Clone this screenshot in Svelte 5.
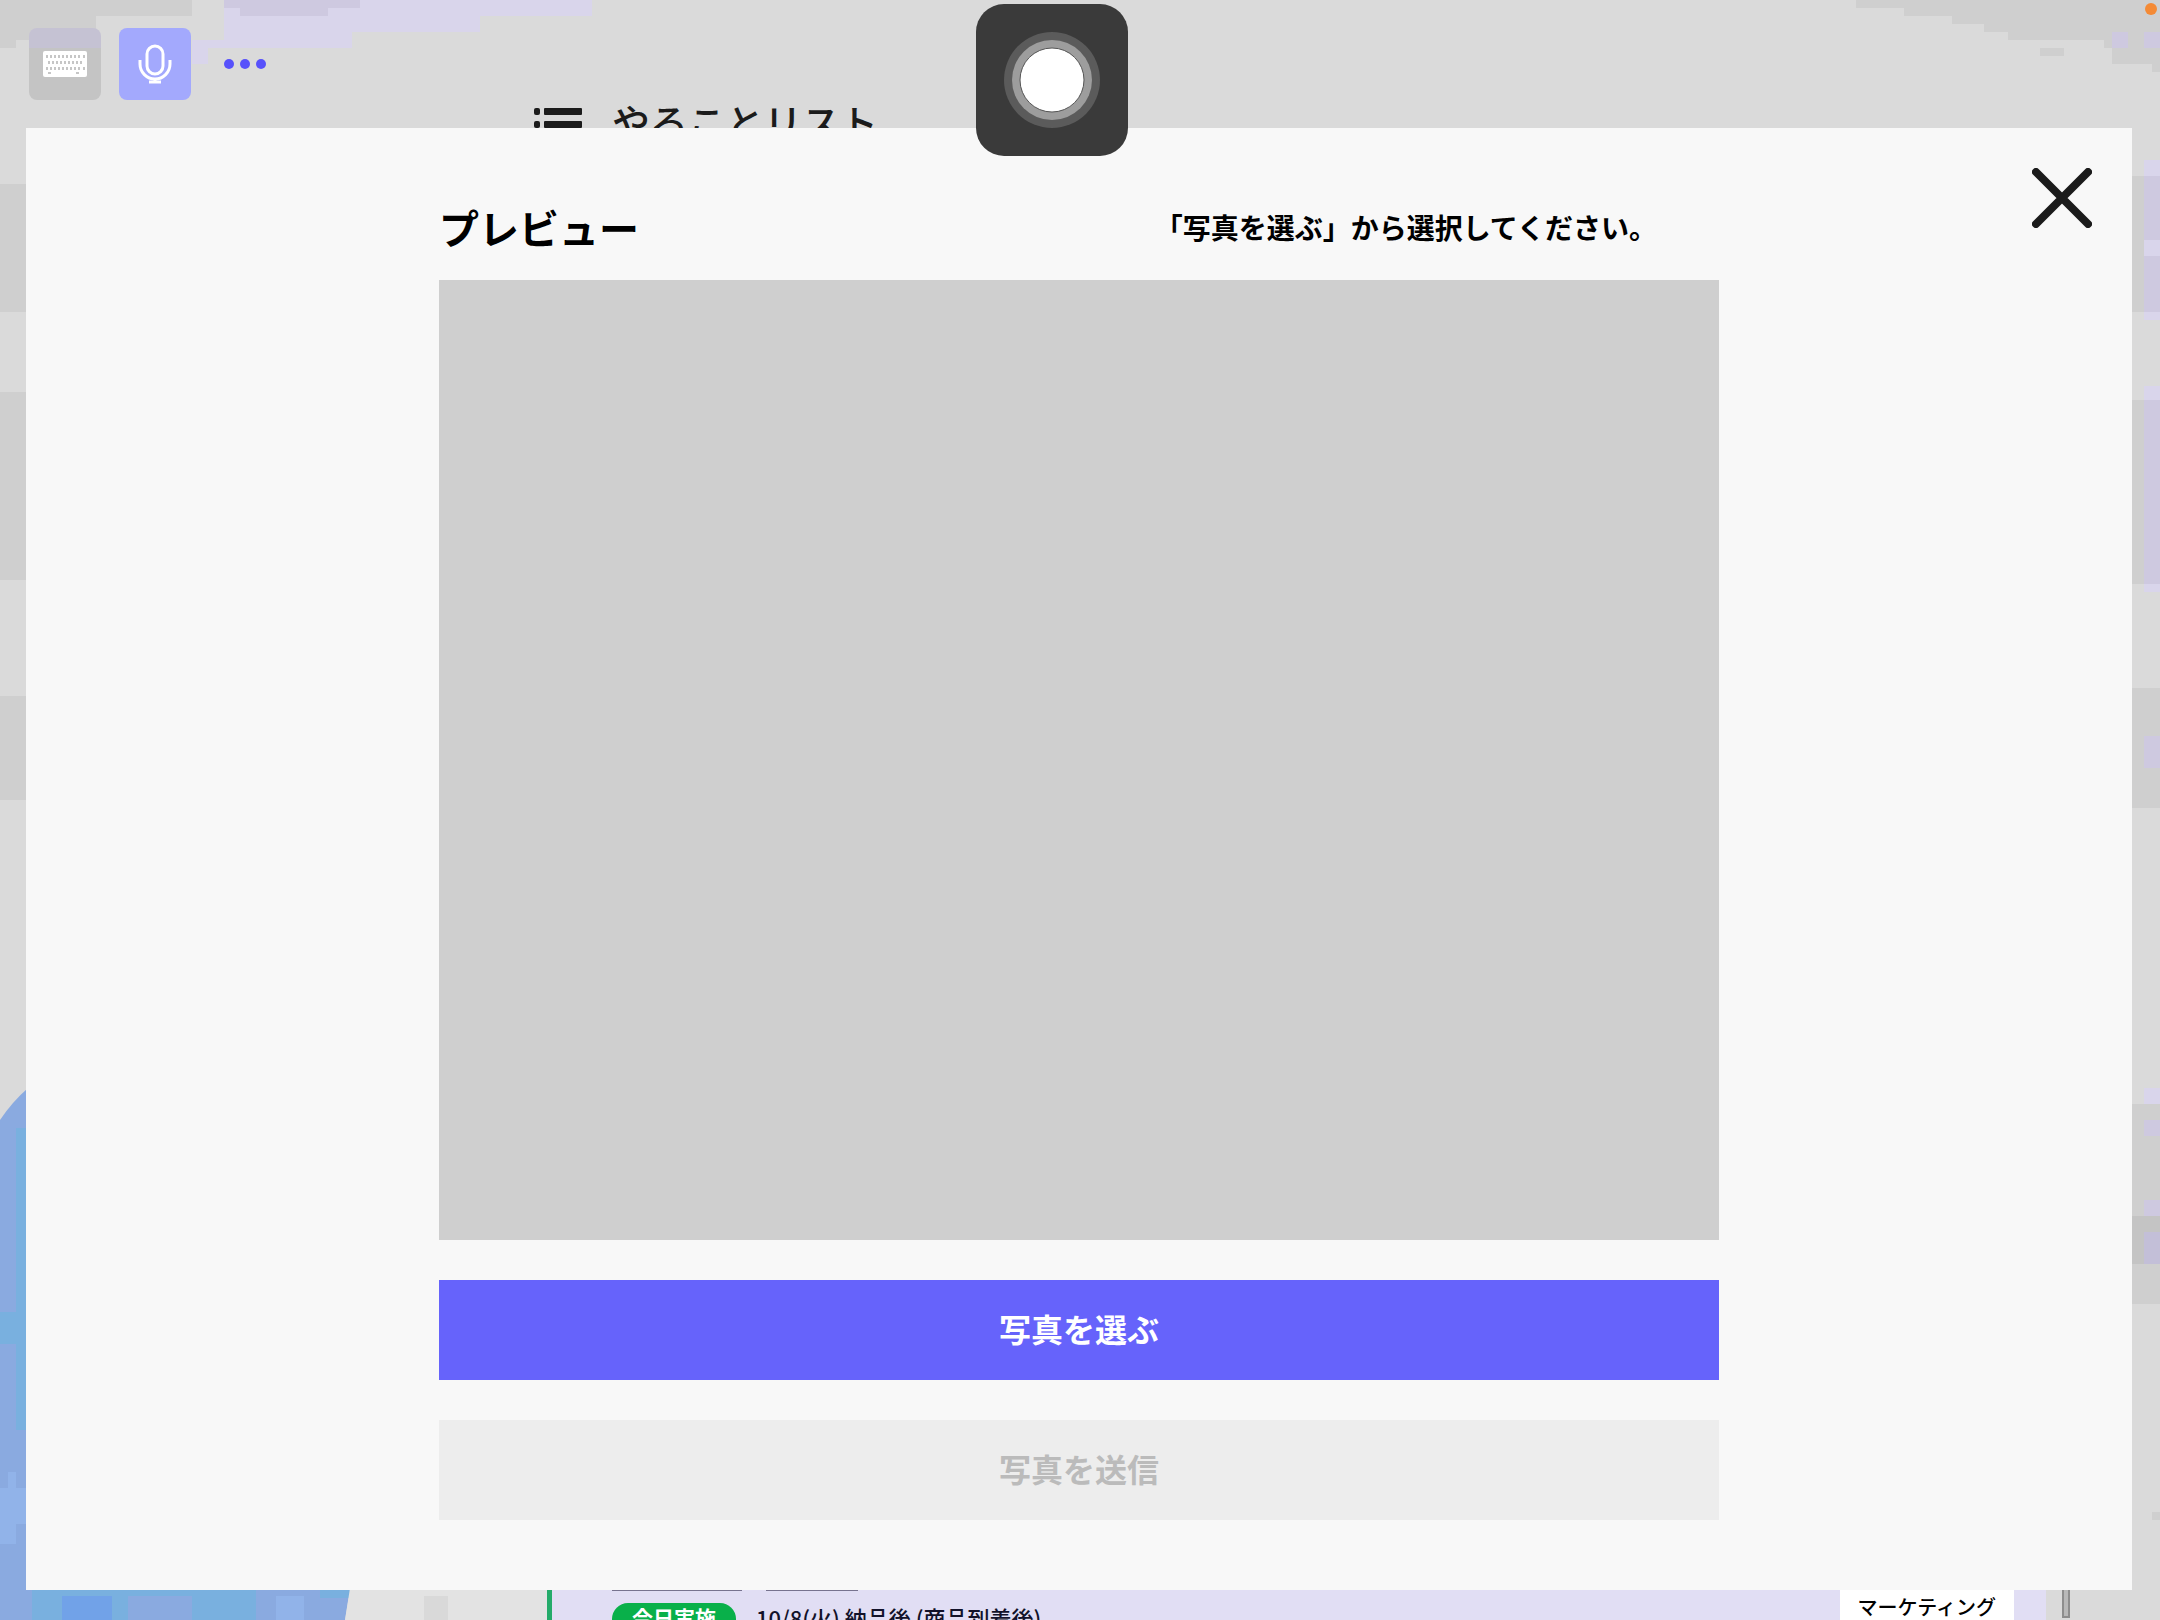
<script>
  const title = 'やることリスト';
  const spaces = [0, 1, 2, 3, 4, 5, 6, 7, 8];
</script>

<div class="page">
  <svg class="backdrop" viewBox="0 0 2160 1620" preserveAspectRatio="none" aria-hidden="true">
    <path fill="#cfcfcf" d="M0 0H192V16H96V40H16V48H0z" />
    <path fill="#d9d5eb" d="M224 0H592V16H480V32H352V48H208V64H192V40H224z" />
    <path fill="#cec9e0" d="M224 0H360V8H328V16H240V8H224z" />
    <path fill="#cfcfcf" d="M1856 0H2160V72H2152V64H2112V48H2104V40H2008V32H1984V24H1952V16H1904V8H1856zM2040 48H2064V56H2040z" />
    <path fill="#cec9e0" d="M2112 32H2128V48H2112zM2144 32H2160V48H2144z" />
    <path fill="#cfcfcf" d="M0 184H28V312H0zM0 392H28V580H0zM0 696H28V800H0z" />
    <path fill="#cfcfcf" d="M2130 176H2160V312H2130zM2130 400H2160V584H2130zM2130 688H2160V808H2130zM2130 1104H2160V1304H2130zM2152 1512H2160V1520H2152z" />
    <path fill="#c4c4c4" d="M2130 1216H2160V1264H2130z" />
    <path fill="#d9d5eb" d="M2144 160H2160V320H2144zM2144 386H2160V592H2144zM2144 1088H2160V1104H2144z" />
    <path fill="#cec9e0" d="M2144 176H2160V240H2144zM2144 256H2160V312H2144zM2144 400H2160V584H2144zM2144 736H2160V768H2144zM2144 1120H2160V1136H2144zM2144 1200H2160V1216H2144z" />
    <path fill="#c3bfd8" d="M2144 1232H2160V1264H2144z" />
    <path fill="#8aaae0" d="M0 1120Q12 1102 28 1088C190 1150 350 1390 350 1590L345 1620H0z" />
    <path fill="#79b0df" d="M16 1128H28V1430H16zM0 1312H16V1344H0zM32 1588H256V1620H32zM320 1588H350V1598H320z" />
    <path fill="#91b3e9" d="M8 1472H16V1488H28V1524H16V1544H0V1488H8zM276 1596H304V1620H276z" />
    <path fill="#71a2e8" d="M62 1596H112V1620H62z" />
    <path fill="#8aaae0" d="M128 1596H192V1620H128z" />
    <path fill="#e3e3e3" d="M350 1588H548V1620H345z" />
    <path fill="#d9d9d9" d="M424 1596H448V1620H424z" />
  </svg>

  <div class="toolbar">
    <button class="tool" aria-label="キーボード">
      <svg width="44" height="26" viewBox="0 0 44 26">
        <rect width="44" height="26" rx="2" fill="#fff" />
        <g fill="#c6c6c6">
          {#each spaces as i}
            <rect x={3 + i * 4} y="4" width="2" height="3" />
            <rect x={5 + i * 4} y="10" width="2" height="3" />
            <rect x={3 + i * 4} y="16" width="2" height="3" />
          {/each}
          <rect x="5" y="21" width="3" height="2" />
          <rect x="33" y="21" width="3" height="2" />
          <rect x="40" y="4" width="2" height="3" />
          <rect x="40" y="16" width="2" height="3" />
        </g>
      </svg>
    </button>
    <button class="tool mic" aria-label="マイク">
      <svg width="34" height="40" viewBox="0 0 34 40" fill="none" stroke="#fff" stroke-width="3">
        <rect x="9" y="2" width="16" height="28" rx="8" />
        <path d="M2 16v4a15 15 0 0 0 30 0v-4" />
        <path d="M17 35v3M11 38h12" />
      </svg>
    </button>
    <button class="more" aria-label="その他">
      <svg width="44" height="12" viewBox="0 0 44 12" fill="#5751fb">
        <circle cx="6" cy="6" r="5" /><circle cx="22" cy="6" r="5" /><circle cx="38" cy="6" r="5" />
      </svg>
    </button>
  </div>

  <main>
    <h1>
      <svg width="48" height="34" viewBox="0 0 48 34" fill="#1b1b1b">
        <rect width="6" height="7" rx="2" /><rect x="10" width="38" height="7" rx="1" />
        <rect y="13" width="6" height="7" rx="2" /><rect x="10" y="13" width="38" height="7" rx="1" />
        <rect y="26" width="6" height="7" rx="2" /><rect x="10" y="26" width="38" height="7" rx="1" />
      </svg>
      <span>{title}</span>
    </h1>
    <div class="list">
      <div class="card">
        <div class="task">
          <div class="links"><span></span><span class="short"></span></div>
          <div class="line"><span class="pill">今日実施</span><span class="due">10/8(火) 納品後 (商品到着後)</span></div>
        </div>
        <span class="tag">マーケティング</span>
      </div>
      <div class="scroll"></div>
    </div>
  </main>

  <div class="overlay">
    <section class="modal" role="dialog" aria-modal="true" aria-labelledby="preview-title">
      <button class="close" aria-label="閉じる">
        <svg width="60" height="60" viewBox="0 0 60 60" stroke="#1b1b1b" stroke-width="8" stroke-linecap="round">
          <path d="M4 4L56 56M56 4L4 56" />
        </svg>
      </button>
      <div class="content">
        <header>
          <h2 id="preview-title">プレビュー</h2>
          <p>「写真を選ぶ」から選択してください。</p>
        </header>
        <div class="preview"></div>
        <button class="action">写真を選ぶ</button>
        <button class="action" disabled>写真を送信</button>
      </div>
    </section>
  </div>

  <button class="assist" aria-label="メニュー">
    <svg width="96" height="96" viewBox="0 0 96 96">
      <circle cx="48" cy="48" r="48" fill="#5b5b5b" />
      <circle cx="48" cy="48" r="40" fill="#9d9d9d" />
      <circle cx="48" cy="48" r="32" fill="#fff" stroke="#555" stroke-width="1" />
    </svg>
  </button>
  <span class="indicator"></span>
</div>

<style>
  :global(body) { margin: 0; }
  .page {
    position: relative;
    display: flex;
    flex-direction: column;
    height: 100vh;
    overflow: hidden;
    background: #dadada;
    color: #000;
    font-family: "Noto Sans CJK JP", "Noto Sans", sans-serif;
  }
  .page * { box-sizing: border-box; }
  button { border: 0; padding: 0; margin: 0; font: inherit; background: none; cursor: pointer; }
  svg { display: block; }
  .backdrop { position: absolute; inset: 0; width: 100%; height: 100%; }
  .toolbar { position: relative; display: flex; align-items: center; gap: 18px; padding: 28px 29px 0; }
  .tool {
    display: grid;
    place-items: center;
    width: 72px;
    height: 72px;
    border-radius: 8px;
    background: linear-gradient(#c5c2d3 0 20px, #c4c4c4 20px);
  }
  .mic { background: #a3a9fd; }
  .more { padding: 12px 14px; }
  main { position: relative; display: flex; flex-direction: column; flex: 1; min-height: 0; }
  h1 {
    display: flex;
    align-items: center;
    gap: 30px;
    margin: 0;
    padding-left: 534px;
    font-size: 38px;
    font-weight: 500;
    line-height: 40px;
    color: #1b1b1b;
  }
  h1 svg { margin-top: 8px; }
  .list { display: flex; gap: 16px; margin: auto 90px -30px 547px; }
  .card {
    display: flex;
    align-items: flex-start;
    justify-content: space-between;
    flex: 1;
    height: 64px;
    padding: 0 32px 0 60px;
    border-left: 5px solid #23ab6a;
    background: #e1def4;
  }
  .links { display: flex; gap: 24px; height: 17px; }
  .links span { width: 130px; height: 5px; border-bottom: 1px solid #77738f; }
  .links .short { width: 92px; }
  .line { display: flex; align-items: flex-start; gap: 20px; line-height: 28px; font-size: 22px; font-weight: 500; color: #12122a; }
  .pill { height: 32px; padding: 0 20px; border-radius: 16px; background: #09b04a; color: #fff; font-size: 21px; font-weight: 700; }
  .tag { padding: 0 18px; background: #fff; font-size: 20px; font-weight: 500; line-height: 42px; }
  .scroll { width: 8px; height: 32px; border: 2px solid #8d8d8d; background: #b8b8b8; }
  .overlay { position: absolute; inset: 0; padding: 128px 28px 30px 26px; }
  .modal { position: relative; height: 100%; padding: 70px 60px; background: #f8f8f8; }
  .close { position: absolute; top: 40px; right: 40px; }
  .content { display: flex; flex-direction: column; gap: 40px; max-width: 1280px; height: 100%; margin: 0 auto; }
  header { display: flex; align-items: center; justify-content: space-between; padding-right: 62px; line-height: 58px; margin-bottom: -16px; }
  h2 { margin: 0; font-size: 40px; font-weight: 700; }
  p { margin: 0; font-size: 28px; font-weight: 700; }
  .preview { flex: 1; background: #cfcfcf; }
  .action { height: 100px; padding-bottom: 4px; background: #6663fb; color: #fff; font-size: 32px; font-weight: 700; }
  .action:disabled { background: #ededed; color: #bbb; cursor: default; }
  .assist {
    position: absolute;
    top: 4px;
    left: 50%;
    display: grid;
    place-items: center;
    width: 152px;
    height: 152px;
    margin-left: -104px;
    border-radius: 28px;
    background: #3a3a3a;
  }
  .indicator { position: absolute; top: 3px; right: 3px; width: 12px; height: 12px; border-radius: 50%; background: #f48a35; }
</style>
